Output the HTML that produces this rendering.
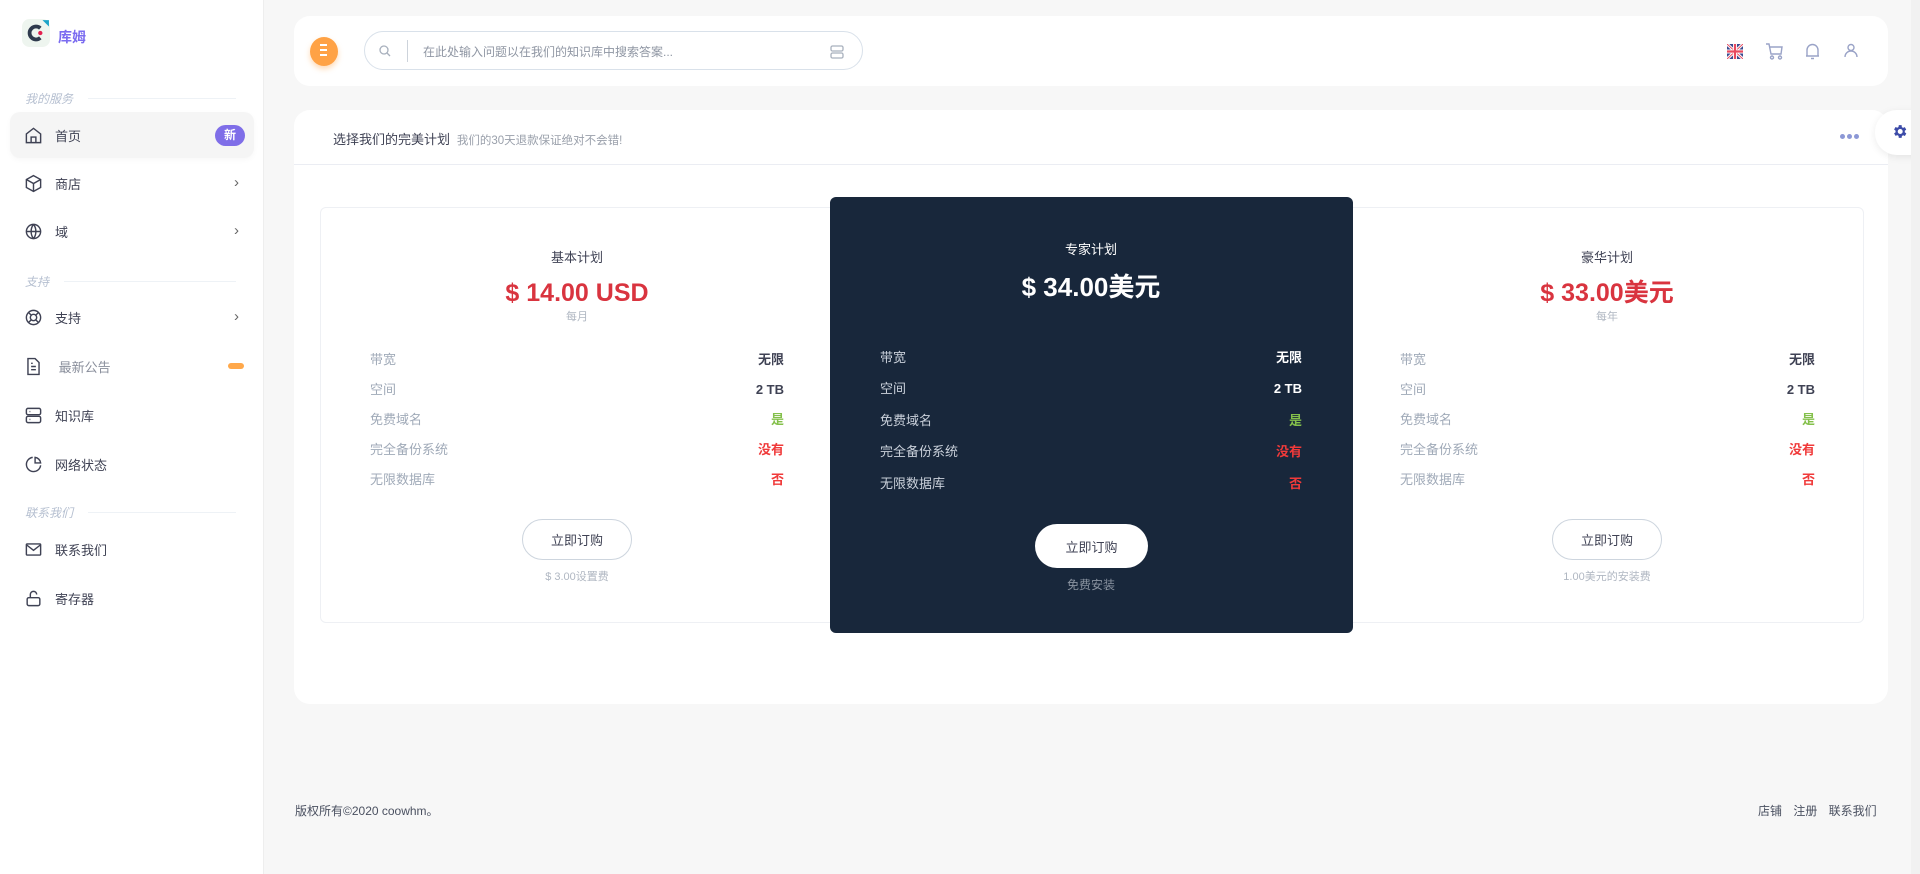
<!DOCTYPE html>
<html><head><meta charset="utf-8">
<style>
*{box-sizing:border-box;margin:0;padding:0}
body{width:1920px;height:874px;overflow:hidden;background:#f7f7f7;font-family:"Liberation Sans","Noto Sans CJK SC",sans-serif;position:relative;color:#3f4254}
.a{position:absolute}
.side{left:0;top:0;width:264px;height:874px;background:#fff;border-right:1px solid #eee}
.sec{font-size:12px;font-style:italic;color:#b5bfd0;left:25px}
.secl{height:1px;background:#eef2f6}
.item{left:24px;font-size:13px;color:#3f4254;display:flex;align-items:center;height:22px}
.item svg{width:19px;height:19px;margin-right:12px}
.chev{left:234px;font-size:15px;color:#666}
.card{background:#fff;border-radius:16px}
.c{text-align:center;white-space:nowrap}
.row{display:flex;justify-content:space-between;align-items:center;line-height:18px}
.lab{font-size:13px;color:#a0aab8}
.val{font-size:13px;font-weight:bold;text-align:right}
.btn{border:1px solid #cdd5de;border-radius:22px;background:#fff;font-size:13px;color:#3f4254;display:flex;align-items:center;justify-content:center}
.price{line-height:30px;height:30px}
</style></head><body>
<div class="a side"></div>
<svg class="a" style="left:22px;top:19px" width="28" height="28" viewBox="0 0 26 26"><rect width="26" height="26" rx="7" fill="#eef5ef"/><path d="M17 8.5a6 6 0 1 0 0 9" stroke="#2e3a4d" stroke-width="3.5" fill="none"/><circle cx="17" cy="13" r="2" fill="#e3204f"/><path d="M19 1l6 0 0 6z" fill="#1aa3c7"/></svg>
<div class="a" style="left:58px;top:27px;font-size:14px;font-weight:bold;color:#7b6cf0">库姆</div>

<div class="a sec" style="top:90px">我的服务</div><div class="a secl" style="left:88px;width:148px;top:98px"></div>
<div class="a" style="left:10px;top:112px;width:244px;height:46px;background:#f5f5f5;border-radius:10px;box-shadow:0 2px 6px rgba(0,0,0,.03)"></div>
<div class="a item" style="top:124px"><svg viewBox="0 0 24 24" fill="none" stroke="#3f4254" stroke-width="1.8"><path d="M3 10l9-7 9 7v11H3z"/><path d="M9 21v-7h6v7"/></svg>首页</div>
<div class="a" style="left:215px;top:125px;width:30px;height:21px;border-radius:11px;background:#7f6ee8;color:#fff;font-size:12px;font-weight:bold;text-align:center;line-height:21px">新</div>
<div class="a item" style="top:172px"><svg viewBox="0 0 24 24" fill="none" stroke="#3f4254" stroke-width="1.8"><path d="M12 2l9 5v10l-9 5-9-5V7z"/><path d="M3 7l9 5 9-5M12 12v10"/></svg>商店</div><div class="a chev" style="top:174px">›</div>
<div class="a item" style="top:220px"><svg viewBox="0 0 24 24" fill="none" stroke="#3f4254" stroke-width="1.8"><circle cx="12" cy="12" r="9"/><path d="M3 12h18M12 3c-4 5-4 13 0 18M12 3c4 5 4 13 0 18"/></svg>域</div><div class="a chev" style="top:222px">›</div>
<div class="a sec" style="top:273px">支持</div><div class="a secl" style="left:64px;width:172px;top:281px"></div>
<div class="a item" style="top:306px"><svg viewBox="0 0 24 24" fill="none" stroke="#3f4254" stroke-width="1.8"><circle cx="12" cy="12" r="9"/><circle cx="12" cy="12" r="4"/><path d="M5.6 5.6l3.6 3.6M14.8 14.8l3.6 3.6M18.4 5.6l-3.6 3.6M9.2 14.8l-3.6 3.6"/></svg>支持</div><div class="a chev" style="top:308px">›</div>
<div class="a item" style="top:355px;color:#8a8f9c"><svg viewBox="0 0 24 24" fill="none" stroke="#3f4254" stroke-width="1.8"><path d="M5 2h9l5 5v15H5z"/><path d="M9 12h6M9 16h6M9 8h2"/></svg>&nbsp;最新公告</div>
<div class="a" style="left:228px;top:363px;width:16px;height:6px;border-radius:3px;background:#ffa84a"></div>
<div class="a item" style="top:404px"><svg viewBox="0 0 24 24" fill="none" stroke="#3f4254" stroke-width="1.8"><rect x="3" y="3" width="18" height="8" rx="2"/><rect x="3" y="13" width="18" height="8" rx="2"/><path d="M7 7h1M7 17h1"/></svg>知识库</div>
<div class="a item" style="top:453px"><svg viewBox="0 0 24 24" fill="none" stroke="#3f4254" stroke-width="1.8"><path d="M21 13a9 9 0 1 1-10-10"/><path d="M14 3a8 8 0 0 1 7 7h-7z"/></svg>网络状态</div>
<div class="a sec" style="top:504px">联系我们</div><div class="a secl" style="left:88px;width:148px;top:512px"></div>
<div class="a item" style="top:538px"><svg viewBox="0 0 24 24" fill="none" stroke="#3f4254" stroke-width="1.8"><rect x="3" y="5" width="18" height="14" rx="1"/><path d="M3 6l9 7 9-7"/></svg>联系我们</div>
<div class="a item" style="top:587px"><svg viewBox="0 0 24 24" fill="none" stroke="#3f4254" stroke-width="1.8"><rect x="4" y="11" width="16" height="10" rx="2"/><path d="M8 11V7a4 4 0 0 1 8 0"/></svg>寄存器</div>

<div class="a card" style="left:294px;top:16px;width:1594px;height:70px"></div>
<div class="a" style="left:310px;top:37px;width:28px;height:29px;border-radius:50%;background:#ffa245;box-shadow:0 3px 6px rgba(255,162,69,.4)"></div>
<div class="a" style="left:320px;top:44px;width:7px;height:2px;background:#fff;box-shadow:0 5px 0 #fff,0 10px 0 #fff"></div>
<div class="a" style="left:364px;top:31px;width:499px;height:39px;border:1px solid #d9e1ea;border-radius:20px"></div>
<svg class="a" style="left:379px;top:45px" width="12" height="12" viewBox="0 0 12 12" fill="none" stroke="#a8b0bd" stroke-width="1.3"><circle cx="5" cy="5" r="4"/><path d="M8 8l3 3"/></svg>
<div class="a" style="left:407px;top:40px;width:1px;height:22px;background:#cdd3db"></div>
<div class="a" style="left:423px;top:43px;font-size:12px;color:#8f96a3">在此处输入问题以在我们的知识库中搜索答案...</div>
<svg class="a" style="left:830px;top:45px" width="14" height="14" viewBox="0 0 14 14" fill="none" stroke="#a8b0bd" stroke-width="1.3"><rect x="1" y="1" width="12" height="5" rx="1.5"/><rect x="1" y="8" width="12" height="5" rx="1.5"/></svg>
<svg class="a" style="left:1727px;top:44px" width="16" height="15" viewBox="0 0 16 15"><rect width="16" height="15" rx="3" fill="#3a4a8f"/><path d="M0 0l16 15M16 0L0 15" stroke="#fff" stroke-width="3"/><path d="M0 0l16 15M16 0L0 15" stroke="#e84a5f" stroke-width="1"/><path d="M8 0v15M0 7.5h16" stroke="#fff" stroke-width="4"/><path d="M8 0v15M0 7.5h16" stroke="#e84a5f" stroke-width="2.2"/></svg>
<svg class="a" style="left:1765px;top:43px" width="18" height="17" viewBox="0 0 18 17" fill="none" stroke="#9aa3c7" stroke-width="1.4"><path d="M1 1h3l2 10h10l1-7H5"/><circle cx="7" cy="14.5" r="1.5"/><circle cx="15" cy="14.5" r="1.5"/></svg>
<svg class="a" style="left:1805px;top:43px" width="15" height="17" viewBox="0 0 15 17" fill="none" stroke="#9aa3c7" stroke-width="1.4"><path d="M2 13V7a5.5 5.5 0 0 1 11 0v6zM1 13h13M6 15.5h3"/></svg>
<svg class="a" style="left:1844px;top:43px" width="14" height="15" viewBox="0 0 14 15" fill="none" stroke="#9aa3c7" stroke-width="1.4"><circle cx="7" cy="4.5" r="3"/><path d="M1 14a6 6 0 0 1 12 0"/></svg>

<div class="a card" style="left:294px;top:110px;width:1594px;height:594px"></div>
<div class="a" style="left:294px;top:164px;width:1594px;height:1px;background:#ebedf3"></div>
<div class="a" style="left:333px;top:129px;font-size:13px;color:#3f4254">选择我们的完美计划 <span style="font-size:11.5px;color:#9aa0ab">&nbsp;我们的30天退款保证绝对不会错!</span></div>
<div class="a" style="left:1840px;top:134px;width:5px;height:5px;border-radius:50%;background:#8c98d6;box-shadow:7px 0 0 #8c98d6,14px 0 0 #8c98d6"></div>
<div class="a" style="left:1875px;top:110px;width:50px;height:45px;background:#fff;border-radius:22px 0 0 22px;box-shadow:0 2px 8px rgba(0,0,0,.08)"></div>
<svg class="a" style="left:1891px;top:123px" width="17" height="17" viewBox="0 0 24 24"><path fill="#3c4ba8" d="M19.4 13a7.5 7.5 0 0 0 0-2l2.1-1.6-2-3.5-2.5 1a7.5 7.5 0 0 0-1.7-1L15 3h-4l-.4 2.7a7.5 7.5 0 0 0-1.7 1l-2.5-1-2 3.5L6.5 11a7.5 7.5 0 0 0 0 2l-2.1 1.6 2 3.5 2.5-1a7.5 7.5 0 0 0 1.7 1L11 21h4l.4-2.7a7.5 7.5 0 0 0 1.7-1l2.5 1 2-3.5zM13 15.5a3.5 3.5 0 1 1 0-7 3.5 3.5 0 0 1 0 7z"/></svg>

<div class="a" style="left:320px;top:207px;width:1544px;height:416px;background:#fff;border:1px solid #eef0f4;border-radius:6px"></div>
<div class="a" style="left:830px;top:197px;width:523px;height:436px;background:#18273b;border-radius:6px"></div>

<div class="a c" style="left:477px;width:200px;top:247px;font-size:13px;color:#3f4254">基本计划</div>
<div class="a c price" style="left:427px;width:300px;top:278px;font-size:25px;font-weight:bold;color:#d9343f">$ 14.00 USD</div>
<div class="a c" style="left:477px;width:200px;top:308px;font-size:11px;color:#b0b7c2">每月</div>
<div class="a" style="left:370px;top:345px;width:414px">
<div class="row" style="height:30px"><span class="lab">带宽</span><span class="val" style="color:#3f4254">无限</span></div>
<div class="row" style="height:30px"><span class="lab">空间</span><span class="val" style="color:#3f4254">2 TB</span></div>
<div class="row" style="height:30px"><span class="lab">免费域名</span><span class="val" style="color:#84c04b">是</span></div>
<div class="row" style="height:30px"><span class="lab">完全备份系统</span><span class="val" style="color:#f03a3a">没有</span></div>
<div class="row" style="height:30px"><span class="lab">无限数据库</span><span class="val" style="color:#f03a3a">否</span></div></div>
<div class="a btn" style="left:522px;top:519px;width:110px;height:41px">立即订购</div>
<div class="a c" style="left:477px;width:200px;top:568px;font-size:11px;color:#b0b7c2">$ 3.00设置费</div>

<div class="a c" style="left:991px;width:200px;top:239px;font-size:13px;color:#fff">专家计划</div>
<div class="a c price" style="left:941px;width:300px;top:272px;font-size:26px;font-weight:bold;color:#fff">$ 34.00美元</div>
<div class="a" style="left:880px;top:342px;width:422px">
<div class="row" style="height:31.5px"><span class="lab" style="color:#c9d0da">带宽</span><span class="val" style="color:#fff">无限</span></div>
<div class="row" style="height:31.5px"><span class="lab" style="color:#c9d0da">空间</span><span class="val" style="color:#fff">2 TB</span></div>
<div class="row" style="height:31.5px"><span class="lab" style="color:#c9d0da">免费域名</span><span class="val" style="color:#84c04b">是</span></div>
<div class="row" style="height:31.5px"><span class="lab" style="color:#c9d0da">完全备份系统</span><span class="val" style="color:#f03a3a">没有</span></div>
<div class="row" style="height:31.5px"><span class="lab" style="color:#c9d0da">无限数据库</span><span class="val" style="color:#f03a3a">否</span></div></div>
<div class="a btn" style="left:1035px;top:524px;width:113px;height:44px;border:none">立即订购</div>
<div class="a c" style="left:991px;width:200px;top:576px;font-size:12px;color:#8a93a0">免费安装</div>

<div class="a c" style="left:1507px;width:200px;top:247px;font-size:13px;color:#3f4254">豪华计划</div>
<div class="a c price" style="left:1457px;width:300px;top:278px;font-size:25px;font-weight:bold;color:#d9343f">$ 33.00美元</div>
<div class="a c" style="left:1507px;width:200px;top:308px;font-size:11px;color:#b0b7c2">每年</div>
<div class="a" style="left:1400px;top:345px;width:415px">
<div class="row" style="height:30px"><span class="lab">带宽</span><span class="val" style="color:#3f4254">无限</span></div>
<div class="row" style="height:30px"><span class="lab">空间</span><span class="val" style="color:#3f4254">2 TB</span></div>
<div class="row" style="height:30px"><span class="lab">免费域名</span><span class="val" style="color:#84c04b">是</span></div>
<div class="row" style="height:30px"><span class="lab">完全备份系统</span><span class="val" style="color:#f03a3a">没有</span></div>
<div class="row" style="height:30px"><span class="lab">无限数据库</span><span class="val" style="color:#f03a3a">否</span></div></div>
<div class="a btn" style="left:1552px;top:519px;width:110px;height:41px">立即订购</div>
<div class="a c" style="left:1507px;width:200px;top:568px;font-size:11px;color:#b0b7c2">1.00美元的安装费</div>

<div class="a" style="left:295px;top:802px;font-size:12px;color:#4a5060">版权所有©2020 coowhm。</div>
<div class="a" style="left:1758px;top:802px;font-size:12px;color:#4a5060;word-spacing:8px">店铺 注册 联系我们</div>
<div class="a" style="left:1911px;top:0;width:9px;height:874px;background:#f1f1f1"></div>
</body></html>
